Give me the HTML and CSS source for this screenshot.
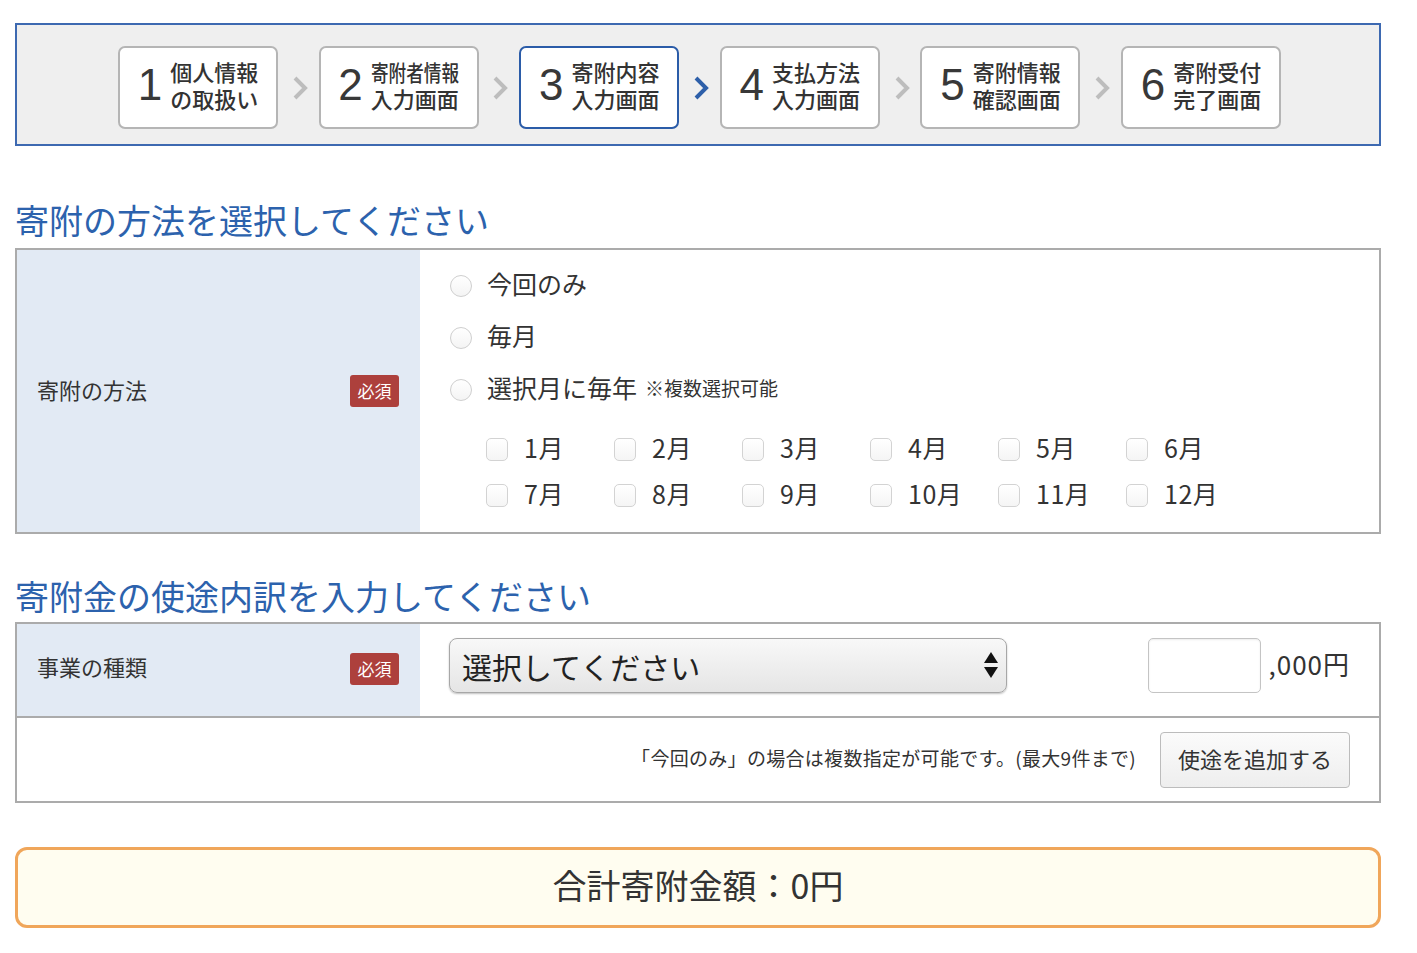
FILE: index.html
```html
<!DOCTYPE html>
<html lang="ja">
<head>
<meta charset="utf-8">
<title>寄附内容入力画面</title>
<link rel="stylesheet" href="styles.css">
</head>
<body>
<div class="page">
  <nav class="steps">
    <ol class="step-list">
      <li class="step"><span class="step-num">1</span><span class="step-label"><span class="line">個人情報</span><span class="line">の取扱い</span></span></li>
      <li class="step-arrow"><svg class="chev" viewBox="0 0 16 26" width="16" height="26"><polyline points="3,3 13,13 3,23" fill="none" stroke="currentColor" stroke-width="4"/></svg></li>
      <li class="step"><span class="step-num">2</span><span class="step-label"><span class="line narrow">寄附者情報</span><span class="line">入力画面</span></span></li>
      <li class="step-arrow"><svg class="chev" viewBox="0 0 16 26" width="16" height="26"><polyline points="3,3 13,13 3,23" fill="none" stroke="currentColor" stroke-width="4"/></svg></li>
      <li class="step is-current"><span class="step-num">3</span><span class="step-label"><span class="line">寄附内容</span><span class="line">入力画面</span></span></li>
      <li class="step-arrow is-current"><svg class="chev" viewBox="0 0 16 26" width="16" height="26"><polyline points="3,3 13,13 3,23" fill="none" stroke="currentColor" stroke-width="4"/></svg></li>
      <li class="step"><span class="step-num">4</span><span class="step-label"><span class="line">支払方法</span><span class="line">入力画面</span></span></li>
      <li class="step-arrow"><svg class="chev" viewBox="0 0 16 26" width="16" height="26"><polyline points="3,3 13,13 3,23" fill="none" stroke="currentColor" stroke-width="4"/></svg></li>
      <li class="step"><span class="step-num">5</span><span class="step-label"><span class="line">寄附情報</span><span class="line">確認画面</span></span></li>
      <li class="step-arrow"><svg class="chev" viewBox="0 0 16 26" width="16" height="26"><polyline points="3,3 13,13 3,23" fill="none" stroke="currentColor" stroke-width="4"/></svg></li>
      <li class="step"><span class="step-num">6</span><span class="step-label"><span class="line">寄附受付</span><span class="line">完了画面</span></span></li>
    </ol>
  </nav>

  <h2 class="section-title first">寄附の方法を選択してください</h2>
  <div class="form-table">
    <div class="form-row">
      <div class="form-head"><span class="head-label">寄附の方法</span><span class="badge">必須</span></div>
      <div class="form-body method-body">
        <label class="radio-line"><input type="radio" name="method" class="radio"><span class="opt-label">今回のみ</span></label>
        <label class="radio-line"><input type="radio" name="method" class="radio"><span class="opt-label">毎月</span></label>
        <label class="radio-line"><input type="radio" name="method" class="radio"><span class="opt-label">選択月に毎年</span><span class="opt-note">※複数選択可能</span></label>
        <div class="months">
          <label class="month"><input type="checkbox" class="check"><span>1月</span></label>
          <label class="month"><input type="checkbox" class="check"><span>2月</span></label>
          <label class="month"><input type="checkbox" class="check"><span>3月</span></label>
          <label class="month"><input type="checkbox" class="check"><span>4月</span></label>
          <label class="month"><input type="checkbox" class="check"><span>5月</span></label>
          <label class="month"><input type="checkbox" class="check"><span>6月</span></label>
          <label class="month"><input type="checkbox" class="check"><span>7月</span></label>
          <label class="month"><input type="checkbox" class="check"><span>8月</span></label>
          <label class="month"><input type="checkbox" class="check"><span>9月</span></label>
          <label class="month"><input type="checkbox" class="check"><span>10月</span></label>
          <label class="month"><input type="checkbox" class="check"><span>11月</span></label>
          <label class="month"><input type="checkbox" class="check"><span>12月</span></label>
        </div>
      </div>
    </div>
  </div>

  <h2 class="section-title second">寄附金の使途内訳を入力してください</h2>
  <div class="form-table">
    <div class="form-row use-row">
      <div class="form-head use-head"><span class="head-label">事業の種類</span><span class="badge">必須</span></div>
      <div class="form-body use-body">
        <div class="select-wrap">
          <select class="select"><option>選択してください</option></select>
          <span class="select-arrows"><svg viewBox="0 0 14 28" width="14" height="28"><polygon points="7,1 14,12 0,12" fill="#111"/><polygon points="0,16 14,16 7,27" fill="#111"/></svg></span>
        </div>
        <input type="text" class="amount">
        <span class="amount-unit">,000円</span>
      </div>
    </div>
    <div class="add-row">
      <span class="add-note">「今回のみ」の場合は複数指定が可能です。(最大9件まで)</span>
      <button type="button" class="add-btn">使途を追加する</button>
    </div>
  </div>

  <div class="total">合計寄附金額：0円</div>
</div>
</body>
</html>
```

FILE: styles.css
```css
html, body {
  margin: 0;
  padding: 0;
  background: #fff;
}

body {
  color: #333;
  font-family: "Noto Sans CJK JP", "Liberation Sans", sans-serif;
}

.page {
  width: 1366px;
  margin-left: 15px;
  padding-top: 23px;
  padding-bottom: 20px;
}

/* steps */
.steps {
  border: 2px solid #3d69b1;
  background: #efefef;
  padding: 21px 0 15px 3px;
  display: flex;
  justify-content: center;
}

.step-list {
  list-style: none;
  margin: 0;
  padding: 0;
  display: flex;
  align-items: center;
}

.step {
  width: 160px;
  height: 83px;
  box-sizing: border-box;
  border: 2px solid #b5b5b5;
  border-radius: 7px;
  background: #fff;
  display: flex;
  align-items: center;
  justify-content: center;
  gap: 8px;
}

.step.is-current {
  border-color: #2b5ca8;
}

.step-num {
  font-family: "Liberation Sans", sans-serif;
  font-size: 44px;
  line-height: 1;
  color: #383838;
  margin-top: -6px;
}

.step-label {
  width: 88px;
  margin-bottom: 6px;
  font-size: 22px;
  line-height: 27px;
  font-weight: 500;
  color: #333;
}

.step-label .line {
  display: block;
  white-space: nowrap;
}

.step-label .line.narrow {
  transform: scaleX(0.8);
  transform-origin: left center;
}

.step-arrow {
  width: 40.6px;
  display: flex;
  justify-content: center;
  padding-left: 3px;
  box-sizing: border-box;
  color: #bdbdbd;
}

.step-arrow.is-current {
  color: #2d5fa9;
}

.chev {
  display: block;
}

/* titles */
.section-title {
  font-size: 34px;
  line-height: 40px;
  font-weight: normal;
  color: #2c62ad;
  margin: 0 0 8px;
}

.section-title.first {
  margin-top: 54px;
}

.section-title.second {
  margin-top: 42px;
  margin-bottom: 6px;
}

/* tables */
.form-table {
  border: 2px solid #ababab;
}

.form-row {
  display: grid;
  grid-template-columns: 403px 1fr;
}

.form-head {
  background: #e2eaf4;
  display: flex;
  align-items: center;
  justify-content: space-between;
  padding: 0 21px 0 20px;
}

.head-label {
  font-size: 22px;
  line-height: 30px;
  margin-bottom: 5px;
}

.badge {
  display: inline-block;
  width: 49px;
  height: 32px;
  line-height: 32px;
  text-align: center;
  font-size: 17px;
  color: #fff;
  background: #ad403c;
  border-radius: 3px;
}

.method-body {
  padding: 10px 30px 14px;
}

.radio-line {
  display: flex;
  align-items: center;
  height: 52px;
}

.radio {
  appearance: none;
  -webkit-appearance: none;
  width: 22px;
  height: 22px;
  margin: 0 15px 0 0;
  border: 1px solid #cfcfcf;
  border-radius: 50%;
  background: linear-gradient(#fff, #f4f4f4);
  box-sizing: border-box;
  flex: none;
}

.opt-label {
  font-size: 25px;
  line-height: 30px;
  margin-top: -6px;
}

.opt-note {
  font-size: 19px;
  line-height: 30px;
  margin-left: 8px;
  margin-top: -4px;
}

.months {
  margin: 10px 0 0 36px;
  display: grid;
  grid-template-columns: repeat(6, 128px);
  grid-auto-rows: 46px;
}

.month {
  display: flex;
  align-items: center;
}

.check {
  appearance: none;
  -webkit-appearance: none;
  width: 22px;
  height: 23px;
  margin: 0 16px 0 0;
  border: 1px solid #d3d3d3;
  border-radius: 5px;
  background: linear-gradient(#fff, #f5f5f5);
  box-sizing: border-box;
  flex: none;
}

.month span {
  font-size: 25px;
  line-height: 30px;
  margin-top: -5px;
  letter-spacing: 0.5px;
}

/* usage table */
.use-row {
  height: 92px;
}

.use-head {
  padding-bottom: 3px;
}

.use-body {
  display: flex;
  align-items: center;
  padding: 14px 29px 23px;
}

.select-wrap {
  position: relative;
  width: 558px;
  height: 55px;
}

.select {
  appearance: none;
  -webkit-appearance: none;
  width: 100%;
  height: 100%;
  box-sizing: border-box;
  padding: 0 40px 0 12px;
  font-family: "Noto Sans CJK JP", sans-serif;
  font-size: 30px;
  color: #222;
  border: 1px solid #a7a7a7;
  border-radius: 8px;
  background: linear-gradient(#f8f8f8, #e5e5e5);
  box-shadow: 0 1px 2px rgba(0, 0, 0, 0.25);
}

.select-arrows {
  position: absolute;
  right: 9px;
  top: 13px;
  display: block;
  pointer-events: none;
}

.select-arrows svg {
  display: block;
}

.amount {
  width: 113px;
  height: 55px;
  box-sizing: border-box;
  margin-left: auto;
  border: 1px solid #c4c4c4;
  border-radius: 5px;
  background: #fff;
  box-shadow: inset 0 1px 2px rgba(0, 0, 0, 0.08);
}

.amount-unit {
  margin-left: 7px;
  font-size: 26px;
  line-height: 30px;
  letter-spacing: 1px;
  margin-top: -3px;
}

.add-row {
  border-top: 2px solid #ababab;
  height: 83px;
  display: flex;
  align-items: center;
  justify-content: flex-end;
  gap: 24px;
  padding-right: 29px;
}

.add-note {
  font-size: 19px;
  line-height: 26px;
  letter-spacing: 0.3px;
  margin-bottom: 3px;
}

.add-btn {
  width: 190px;
  height: 56px;
  font-family: "Noto Sans CJK JP", sans-serif;
  font-size: 22px;
  color: #333;
  border: 1px solid #bcbcbc;
  border-radius: 4px;
  background: linear-gradient(#fbfbfb, #eeeeee);
  padding: 0 0 4px;
}

/* total */
.total {
  margin-top: 44px;
  height: 81px;
  box-sizing: border-box;
  border: 3px solid #f0a65a;
  border-radius: 12px;
  background: #fffdf0;
  text-align: center;
  font-size: 34px;
  line-height: 70px;
  color: #333;
}
```
